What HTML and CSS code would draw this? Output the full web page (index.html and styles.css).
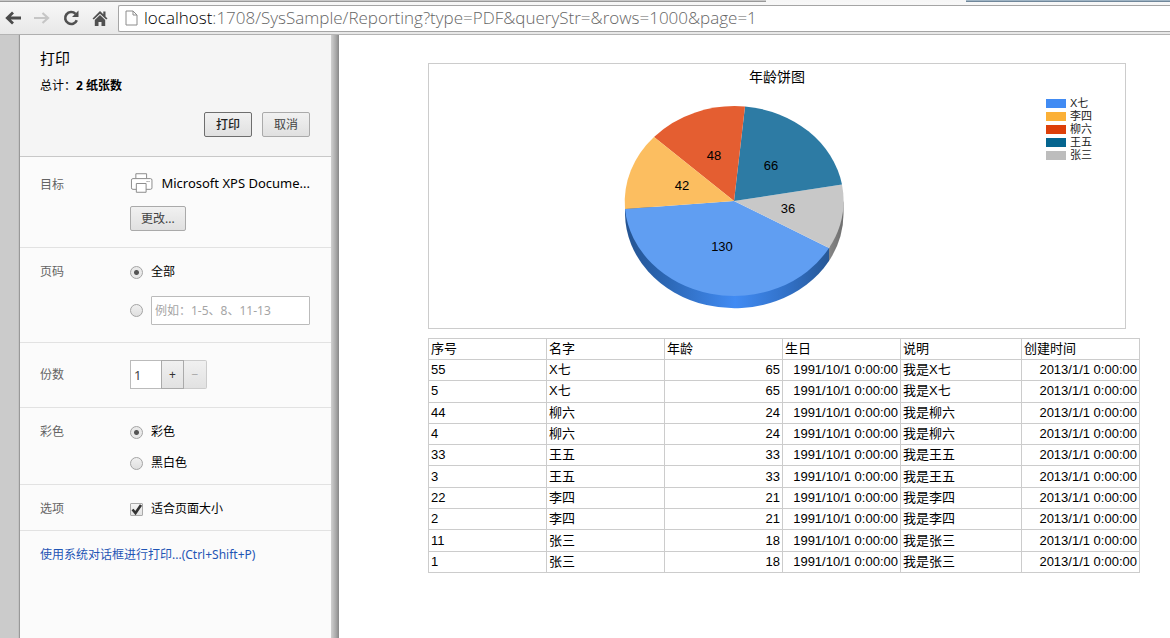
FILE: index.html
```html
<!DOCTYPE html>
<html lang="zh-CN">
<head>
<meta charset="utf-8">
<title>打印</title>
<link rel="stylesheet" href="styles.css">
</head>
<body>
<header class="browser">
  <div class="tabs"><span class="tabs-inactive"></span><span class="tabs-active"></span><span class="tabs-rest"></span></div>
  <div class="toolbar">
    <nav class="nav">
      <button class="nav-btn" type="button" aria-label="后退"><svg width="16" height="14" viewBox="0 0 16 14"><path d="M8 1.5 2.3 7 8 12.5M3 7h13" fill="none" stroke="#4b4b4b" stroke-width="2.8"/></svg></button>
      <button class="nav-btn" type="button" aria-label="前进"><svg width="16" height="14" viewBox="0 0 16 14"><path d="M8.5 2 14 7l-5.500 5M13 7H0" fill="none" stroke="#c6c6c6" stroke-width="2.2"/></svg></button>
      <button class="nav-btn" type="button" aria-label="重新加载"><svg width="16" height="16" viewBox="0 0 16 16"><path d="M12.500 3.800A6 6 0 1 0 13.800 10.200" fill="none" stroke="#505050" stroke-width="2.600"/><path d="M15.500 0.500V7H9z" fill="#505050"/></svg></button>
      <button class="nav-btn nav-home" type="button" aria-label="主页"><svg width="16" height="16" viewBox="0 0 16 16"><path d="M8 1 0.500 8.500 1.800 9.600 8 3.700l6.200 5.900 1.300-1.100-2-2V1.500h-2.200v2.800z" fill="#505050"/><path d="M2.800 10 8 5l5.200 5v6H9.500v-4h-3v4H2.800z" fill="#505050"/></svg></button>
    </nav>
    <div class="address">
      <svg width="13" height="16" viewBox="0 0 13 16"><path d="M1 1h7l4 4v10H1zM8 1v4h4" fill="#fff" stroke="#8c8c8c"/></svg>
      <span class="url"><span class="url-host">localhost</span>:1708/SysSample/Reporting?type=PDF&amp;queryStr=&amp;rows=1000&amp;page=1</span>
    </div>
  </div>
</header>
<div class="workspace">
  <form class="dialog">
    <section class="summary">
      <h1 class="dialog-title">打印</h1>
      <p class="total">总计：<b>2 纸张数</b></p>
      <div class="actions">
        <button class="btn btn-primary" type="button">打印</button>
        <button class="btn" type="button">取消</button>
      </div>
    </section>
    <section class="row row-target">
      <h2 class="row-label">目标</h2>
      <div class="row-body">
        <div class="printer">
          <svg width="24" height="22" viewBox="0 0 24 22"><g fill="#fff" stroke="#8a8a8a"><path d="M6 6.500V1.500h11v5"/><rect x="1.500" y="6.500" width="21" height="11" rx="1.500"/><path d="M6.500 11.500h10v9h-10z"/></g><path d="M17 9.500h1M19 9.500h1" stroke="#777"/></svg>
          <span class="printer-name">Microsoft XPS Docume...</span>
        </div>
        <button class="btn btn-change" type="button">更改...</button>
      </div>
    </section>
    <section class="row row-pages">
      <h2 class="row-label">页码</h2>
      <div class="row-body pages">
        <label class="choice"><input class="radio" type="radio" name="pages" checked>全部</label>
        <div class="choice">
          <input class="radio" type="radio" name="pages" aria-label="页码范围">
          <input class="range" type="text" placeholder="例如：1-5、8、11-13" aria-label="页码范围">
        </div>
      </div>
    </section>
    <section class="row row-copies">
      <label class="row-label" for="copies">份数</label>
      <div class="row-body stepper">
        <input class="copies" id="copies" type="text" value="1">
        <button class="step" type="button">+</button>
        <button class="step step-off" type="button" disabled>−</button>
      </div>
    </section>
    <section class="row row-color">
      <h2 class="row-label">彩色</h2>
      <div class="row-body colors">
        <label class="choice"><input class="radio" type="radio" name="color" checked>彩色</label>
        <label class="choice"><input class="radio" type="radio" name="color">黑白色</label>
      </div>
    </section>
    <section class="row row-options">
      <h2 class="row-label">选项</h2>
      <label class="row-body choice">
        <span class="check"><input class="checkbox" type="checkbox" checked><svg class="tick" width="13" height="13" viewBox="0 0 13 13"><path d="M2.500 6.500 5.500 10 11 2" fill="none" stroke="#333" stroke-width="2.600"/></svg></span>适合页面大小
      </label>
    </section>
    <a class="system-link" href="#">使用系统对话框进行打印...(Ctrl+Shift+P)</a>
  </form>
  <div class="splitter"></div>
  <main class="preview">
    <figure class="chart">
      <figcaption class="chart-title">年龄饼图</figcaption>
      <div class="chart-body">
        <svg class="pie" width="230" height="214" viewBox="620 101 230 214" role="img" aria-label="年龄饼图">
          <defs>
            <linearGradient id="rim" x1="0" x2="1"><stop offset="0" stop-color="#245391"/><stop offset=".22" stop-color="#2d69b8"/><stop offset=".54" stop-color="#418bf3"/><stop offset=".8" stop-color="#3170c6"/><stop offset="1" stop-color="#275896"/></linearGradient>
            <linearGradient id="rimGray" x1="0" x2="1"><stop offset="0" stop-color="#868686"/><stop offset="1" stop-color="#6e6e6e"/></linearGradient>
          </defs>
          <path d="M625 201V214A109.500 95.500 0 0 0 829 261V248z" fill="url(#rim)"/>
          <path d="M829 248V261A109.500 95.500 0 0 0 843.500 214V201z" fill="url(#rimGray)"/>
          <path d="M734 201 625 209A109.500 95.500 0 0 0 829 248z" fill="#609ef2"/>
          <path d="M734 201 829 248A109.500 95.500 0 0 0 842 184.500z" fill="#c8c8c8"/>
          <path d="M734 201 842 184.500A109.500 95.500 0 0 0 745 106.500z" fill="#2d7ba4"/>
          <path d="M734 201 745 106.500A109.500 95.500 0 0 0 654 137z" fill="#e45e31"/>
          <path d="M734 201 654 137A109.500 95.500 0 0 0 625 209z" fill="#fcbe60"/>
          <g class="pie-labels"><text x="714" y="160">48</text><text x="771" y="170">66</text><text x="682" y="190">42</text><text x="788" y="213">36</text><text x="722" y="251">130</text></g>
        </svg>
        <ul class="legend">
          <li class="legend-item"><span class="swatch swatch-blue"></span>X七</li>
          <li class="legend-item"><span class="swatch swatch-amber"></span>李四</li>
          <li class="legend-item"><span class="swatch swatch-red"></span>柳六</li>
          <li class="legend-item"><span class="swatch swatch-teal"></span>王五</li>
          <li class="legend-item"><span class="swatch swatch-gray"></span>张三</li>
        </ul>
      </div>
    </figure>
    <table class="report">
      <colgroup><col class="col"><col class="col"><col class="col"><col class="col"><col class="col-note"><col class="col"></colgroup>
      <thead><tr><th>序号</th><th>名字</th><th>年龄</th><th>生日</th><th>说明</th><th>创建时间</th></tr></thead>
      <tbody>
        <tr><td>55</td><td>X七</td><td class="num">65</td><td class="num">1991/10/1 0:00:00</td><td>我是X七</td><td class="num">2013/1/1 0:00:00</td></tr>
        <tr><td>5</td><td>X七</td><td class="num">65</td><td class="num">1991/10/1 0:00:00</td><td>我是X七</td><td class="num">2013/1/1 0:00:00</td></tr>
        <tr><td>44</td><td>柳六</td><td class="num">24</td><td class="num">1991/10/1 0:00:00</td><td>我是柳六</td><td class="num">2013/1/1 0:00:00</td></tr>
        <tr><td>4</td><td>柳六</td><td class="num">24</td><td class="num">1991/10/1 0:00:00</td><td>我是柳六</td><td class="num">2013/1/1 0:00:00</td></tr>
        <tr><td>33</td><td>王五</td><td class="num">33</td><td class="num">1991/10/1 0:00:00</td><td>我是王五</td><td class="num">2013/1/1 0:00:00</td></tr>
        <tr><td>3</td><td>王五</td><td class="num">33</td><td class="num">1991/10/1 0:00:00</td><td>我是王五</td><td class="num">2013/1/1 0:00:00</td></tr>
        <tr><td>22</td><td>李四</td><td class="num">21</td><td class="num">1991/10/1 0:00:00</td><td>我是李四</td><td class="num">2013/1/1 0:00:00</td></tr>
        <tr><td>2</td><td>李四</td><td class="num">21</td><td class="num">1991/10/1 0:00:00</td><td>我是李四</td><td class="num">2013/1/1 0:00:00</td></tr>
        <tr><td>11</td><td>张三</td><td class="num">18</td><td class="num">1991/10/1 0:00:00</td><td>我是张三</td><td class="num">2013/1/1 0:00:00</td></tr>
        <tr><td>1</td><td>张三</td><td class="num">18</td><td class="num">1991/10/1 0:00:00</td><td>我是张三</td><td class="num">2013/1/1 0:00:00</td></tr>
      </tbody>
    </table>
  </main>
</div>
</body>
</html>
```
FILE: styles.css
```css
* { box-sizing: border-box; }
body {
  margin: 0;
  min-height: 100vh;
  display: flex;
  flex-direction: column;
  background: #fff;
  color: #000;
  font: 12px/18px "Noto Sans", "Noto Sans CJK SC", sans-serif;
}
h1, h2, p, ul, figure { margin: 0; padding: 0; font-weight: 400; }
button, input { font: inherit; margin: 0; }

.browser { background: linear-gradient(#f9f9f9, #e8e8e8); border-bottom: 1px solid #b4b4b4; }
.tabs { display: flex; height: 2px; }
.tabs-inactive { flex: 766; background: #c9c9c9; border-bottom: 1px solid #999; }
.tabs-active { flex: 200; background: #f6f6f6; }
.tabs-rest { flex: 204; background: #9fb4c4; border-bottom: 1px solid #70879a; }
.toolbar { display: flex; align-items: center; height: 32px; }
.nav { display: flex; gap: 13px; padding-left: 5px; width: 118px; }
.nav-btn { display: flex; align-items: center; justify-content: center; width: 16px; height: 20px; padding: 0; border: 0; background: none; }
.address {
  flex: 1;
  display: flex;
  align-items: center;
  gap: 6px;
  height: 27px;
  padding-left: 6px;
  background: #fff;
  border: 1px solid #a5a5a5;
  border-right: 0;
  border-radius: 2px 0 0 2px;
}
.url { font-family: "Open Sans", "Noto Sans", sans-serif; font-size: 17px; font-weight: 300; line-height: 24px; color: #666; white-space: nowrap; }
.url-host { color: #000; }

.workspace { flex: 1; display: flex; padding-left: 20px; background: #cbcbcb; }
.dialog { flex: none; width: 311px; background: #fbfbfb; box-shadow: -1px 0 1px #999; }
.splitter { flex: none; width: 8px; background: linear-gradient(90deg, #d0d0d0, #aaa 60%, #888); }

.summary { height: 122px; padding: 13px 21px 0 20px; background: #f5f5f5; border-bottom: 1px solid #c8c8c8; }
.dialog-title { font-size: 15px; line-height: 20px; }
.total { margin-top: 9px; }
.actions { display: flex; justify-content: flex-end; gap: 10px; margin-top: 17px; }
.btn {
  height: 25px;
  padding: 0 11px;
  border: 1px solid #aaa;
  border-radius: 2px;
  background: linear-gradient(#f1f1f1, #e0e0e0);
  color: #444;
}
.btn-primary { border-color: #6e6e6e; color: #222; font-weight: 500; }

.row { display: flex; padding: 15px 21px 0 20px; border-bottom: 1px solid #e2e2e2; }
.row-label { width: 90px; font-size: 12px; color: #646464; }
.row-body { flex: 1; min-width: 0; }
.row-target { height: 91px; }
.row-target .row-label { padding-top: 4px; }
.printer { display: flex; align-items: center; gap: 8px; }
.printer-name { font-size: 13px; white-space: nowrap; }
.btn-change { margin-top: 12px; padding: 0 10px; }
.row-pages { height: 95px; }
.pages { display: flex; flex-direction: column; gap: 15px; }
.choice { display: flex; align-items: center; gap: 8px; }
.range {
  flex: 1;
  min-width: 0;
  height: 29px;
  padding: 0 3px;
  border: 1px solid #bbb;
  border-radius: 1px;
  background: #fff;
}
.range::placeholder { color: #a5a5a5; }
.radio {
  flex: none;
  appearance: none;
  width: 13px;
  height: 13px;
  border: 1px solid #a4a4a4;
  border-radius: 50%;
  background: linear-gradient(#f0f0f0, #dfdfdf);
}
.radio:checked { background: radial-gradient(circle, #555 0 2px, #e9e9e9 3px); }
.row-copies { height: 65px; padding-top: 17px; align-items: flex-start; }
.row-copies .row-label { padding-top: 6px; }
.stepper { display: flex; }
.copies { width: 31px; height: 29px; padding: 0 3px; border: 1px solid #bbb; border-right: 0; background: #fff; color: #444; font-size: 13px; }
.step { width: 23px; height: 29px; padding: 0; border: 1px solid #aaa; background: linear-gradient(#f0f0f0, #e2e2e2); color: #333; }
.step-off { border-color: #ccc; border-left: 0; border-radius: 0 2px 2px 0; color: #aaa; }
.row-color { height: 77px; }
.colors { display: flex; flex-direction: column; gap: 13px; }
.row-options { height: 46px; }
.row-options .choice { align-items: flex-start; }
.check { display: grid; padding-top: 3px; }
.checkbox, .tick { grid-area: 1 / 1; }
.checkbox { appearance: none; width: 13px; height: 13px; border: 1px solid #aaa; border-radius: 1px; background: linear-gradient(#f5f5f5, #e2e2e2); }
.tick { pointer-events: none; }
.system-link { display: inline-block; padding: 15px 20px; color: #1f55b5; text-decoration: none; }

.preview {
  flex: 1;
  min-width: 0;
  padding: 28px 31px 0 89px;
  background: #fff;
  font-family: "Liberation Sans", "Noto Sans CJK SC", sans-serif;
}
.chart { margin-right: 13px; padding-top: 3px; height: 266px; border: 1px solid #ccc; }
.chart-title { font-size: 14px; line-height: 20px; text-align: center; }
.chart-body { display: flex; padding-top: 14px; }
.pie { flex: 1; min-width: 230px; }
.pie-labels { font-size: 13px; text-anchor: middle; }
.legend { width: 84px; padding-left: 5px; list-style: none; font-size: 11px; line-height: 13px; }
.legend { margin-top: -4px; }
.legend-item { display: flex; align-items: center; gap: 4px; height: 13px; color: #222; }
.swatch { width: 20px; height: 9px; }
.swatch-blue { background: #418bf3; }
.swatch-amber { background: #fbb037; }
.swatch-red { background: #dd3f09; }
.swatch-teal { background: #05658f; }
.swatch-gray { background: #bdbdbd; }

.report { width: 100%; height: 235px; margin-top: 9px; border-collapse: collapse; table-layout: fixed; }
.col { width: 118px; }
.col-note { width: 121px; }
.report th, .report td { height: 21px; padding: 0 2px; border: 1px solid #ccc; font-size: 13px; line-height: 16px; font-weight: 400; text-align: left; white-space: nowrap; }
.report .num { text-align: right; }
```
